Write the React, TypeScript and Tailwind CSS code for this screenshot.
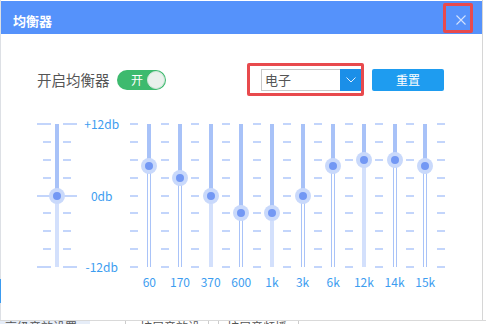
import React from "react";

type Band = { f: string; db: number; hollow: boolean };

const bands: Band[] = [
  { f: "60", db: 5, hollow: true },
  { f: "170", db: 3, hollow: true },
  { f: "370", db: 0, hollow: false },
  { f: "600", db: -3, hollow: true },
  { f: "1k", db: -3, hollow: false },
  { f: "3k", db: 0, hollow: true },
  { f: "6k", db: 5, hollow: true },
  { f: "12k", db: 6, hollow: false },
  { f: "14k", db: 6, hollow: true },
  { f: "15k", db: 5, hollow: true },
];

const rows = [0, 1, 2, 3, 4, 5, 6, 7, 8];

// slider track + thumb, range +12 .. -12
function Track({ db, hollow }: { db: number; hollow: boolean }) {
  const pos = 1 + ((12 - db) / 24) * 143;
  return (
    <div className="relative h-[145px] w-full">
      <div
        className="absolute left-1/2 top-[1px] w-[4px] -translate-x-1/2 bg-[#a8c2f8]"
        style={{ height: pos - 1 }}
      />
      <div
        className={
          hollow
            ? "absolute left-1/2 w-[4px] -translate-x-1/2 border-x border-[#a9c3f8]"
            : "absolute left-1/2 w-[4px] -translate-x-1/2 bg-[#d3e0fc]"
        }
        style={{ top: pos, height: 144 - pos }}
      />
      <div
        className="absolute left-1/2 flex h-[16px] w-[16px] -translate-x-1/2 -translate-y-1/2 items-center justify-center rounded-full bg-[#c9d9fb]"
        style={{ top: pos }}
      >
        <div className="h-[8px] w-[8px] rounded-full bg-[#7398f4]" />
      </div>
    </div>
  );
}

function TickCol() {
  return (
    <div className="flex h-[145px] w-[15.333px] flex-col items-center justify-between">
      {rows.map((r) => (
        <div key={r} className="h-[2px] w-[8px] bg-[#c3d5fb]" />
      ))}
    </div>
  );
}

function PreTicks({ side }: { side: "left" | "right" }) {
  return (
    <div
      className={
        side === "left"
          ? "flex h-[145px] w-[14px] flex-col items-end justify-between"
          : "flex h-[145px] w-[14px] flex-col items-start justify-between"
      }
    >
      {rows.map((r) => (
        <div
          key={r}
          className={
            r === 0 || r === 4 || r === 8
              ? "h-[2px] w-[14px] bg-[#c3d5fb]"
              : "h-[2px] w-[8px] bg-[#c3d5fb]"
          }
        />
      ))}
    </div>
  );
}

export default function App() {
  return (
    <div className="relative h-[324px] w-[486px] overflow-hidden bg-white font-['Noto_Sans_CJK_SC',sans-serif]">
      {/* app behind the dialog */}
      <div className="flex h-[320px]">
        <div className="flex w-[1px] flex-col bg-[#dde0e5]">
          <div className="h-[279px]" />
          <div className="h-[24px] bg-[#3b9bf0]" />
        </div>
        <div className="flex-1" />
        <div className="w-[4px] border-l border-[#d6d6d6] bg-white" />
      </div>
      <div className="flex h-[4px] overflow-hidden border-t border-[#d9d9d9] text-[12px] leading-[12px] text-[#555]">
        <div className="w-[90px] bg-[#e6edf8] pl-[5px]">高级音效设置</div>
        <div className="w-[35px]" />
        <div className="w-[83px] border-l border-[#ccc] pl-[14px]">扩展音效设置</div>
        <div className="w-[10px] border-l border-[#ccc]" />
        <div className="w-[80px] border-l border-[#ccc] pl-[8px]">扩展音频播放设置</div>
        <div className="flex-1 border-l border-[#ccc]" />
      </div>

      {/* dialog window */}
      <div className="absolute left-[1px] top-[1px] h-[319px] w-[481px] bg-white">
        <div className="flex h-[33px] items-center justify-between bg-[#5592fb] pl-[12px]">
          <span className="mt-[6px] text-[13px] font-bold text-white">均衡器</span>
          <div className="mr-[9px] flex h-[30px] w-[30px] items-start justify-end rounded-[2px] border-[3px] border-[#e84a4d] pr-[4px] pt-[9px]">
            <svg width="10" height="10" viewBox="0 0 10 10">
              <path d="M0.5 0.5 L9.5 9.5 M9.5 0.5 L0.5 9.5" stroke="#d4e2fd" strokeWidth="1.1" fill="none" />
            </svg>
          </div>
        </div>

        <div className="flex items-center pl-[36px] pt-[29px]">
          <span className="w-[80px] text-[14.5px] leading-[20px] text-[#555]">开启均衡器</span>
          <div className="flex h-[20px] w-[49px] items-center rounded-full bg-[#3dba6e] pl-[14px]">
            <span className="text-[12px] leading-[14px] text-white">开</span>
            <div className="ml-auto mr-[1px] h-[18px] w-[18px] rounded-full border border-[#cfe6d8] bg-[#e9f1ec]" />
          </div>
          <div className="ml-[81px] flex h-[33px] w-[117px] items-center rounded-[2px] border-[3px] border-[#e84a4d] pl-[11px]">
            <div className="flex h-[22px] w-[100px] border border-[#c8c8c8]">
              <span className="flex-1 pl-[3px] text-[13px] leading-[20px] text-[#555]">电子</span>
              <div className="-my-px -mr-px flex w-[21px] items-center justify-center bg-[#1b8fe8]">
                <svg width="10" height="6" viewBox="0 0 10 6">
                  <path d="M0.5 0.5 L5 5 L9.5 0.5" stroke="#e6f1fc" strokeWidth="1" fill="none" />
                </svg>
              </div>
            </div>
          </div>
          <button className="ml-[8px] h-[22px] w-[72px] rounded-[2px] bg-[#1e9cf0] text-[12px] leading-[22px] text-white">
            重置
          </button>
        </div>

        <div className="mt-[27px] flex items-start pl-[36px]">
          <PreTicks side="left" />
          <div className="w-[12px]">
            <Track db={0} hollow={false} />
          </div>
          <PreTicks side="right" />
          <div className="-mt-[6px] flex h-[157px] w-[49.333px] flex-col items-center justify-between text-[12px] leading-[14px] text-[#3d9df0]">
            <span>+12db</span>
            <span>0db</span>
            <span>-12db</span>
          </div>
          <TickCol />
          {bands.map((b) => (
            <React.Fragment key={b.f}>
              <div className="flex w-[15.333px] flex-col">
                <Track db={b.db} hollow={b.hollow} />
                <div className="mt-[7px] flex justify-center whitespace-nowrap text-[12px] leading-[14px] text-[#3d9df0]">
                  {b.f}
                </div>
              </div>
              <TickCol />
            </React.Fragment>
          ))}
        </div>
      </div>
    </div>
  );
}
